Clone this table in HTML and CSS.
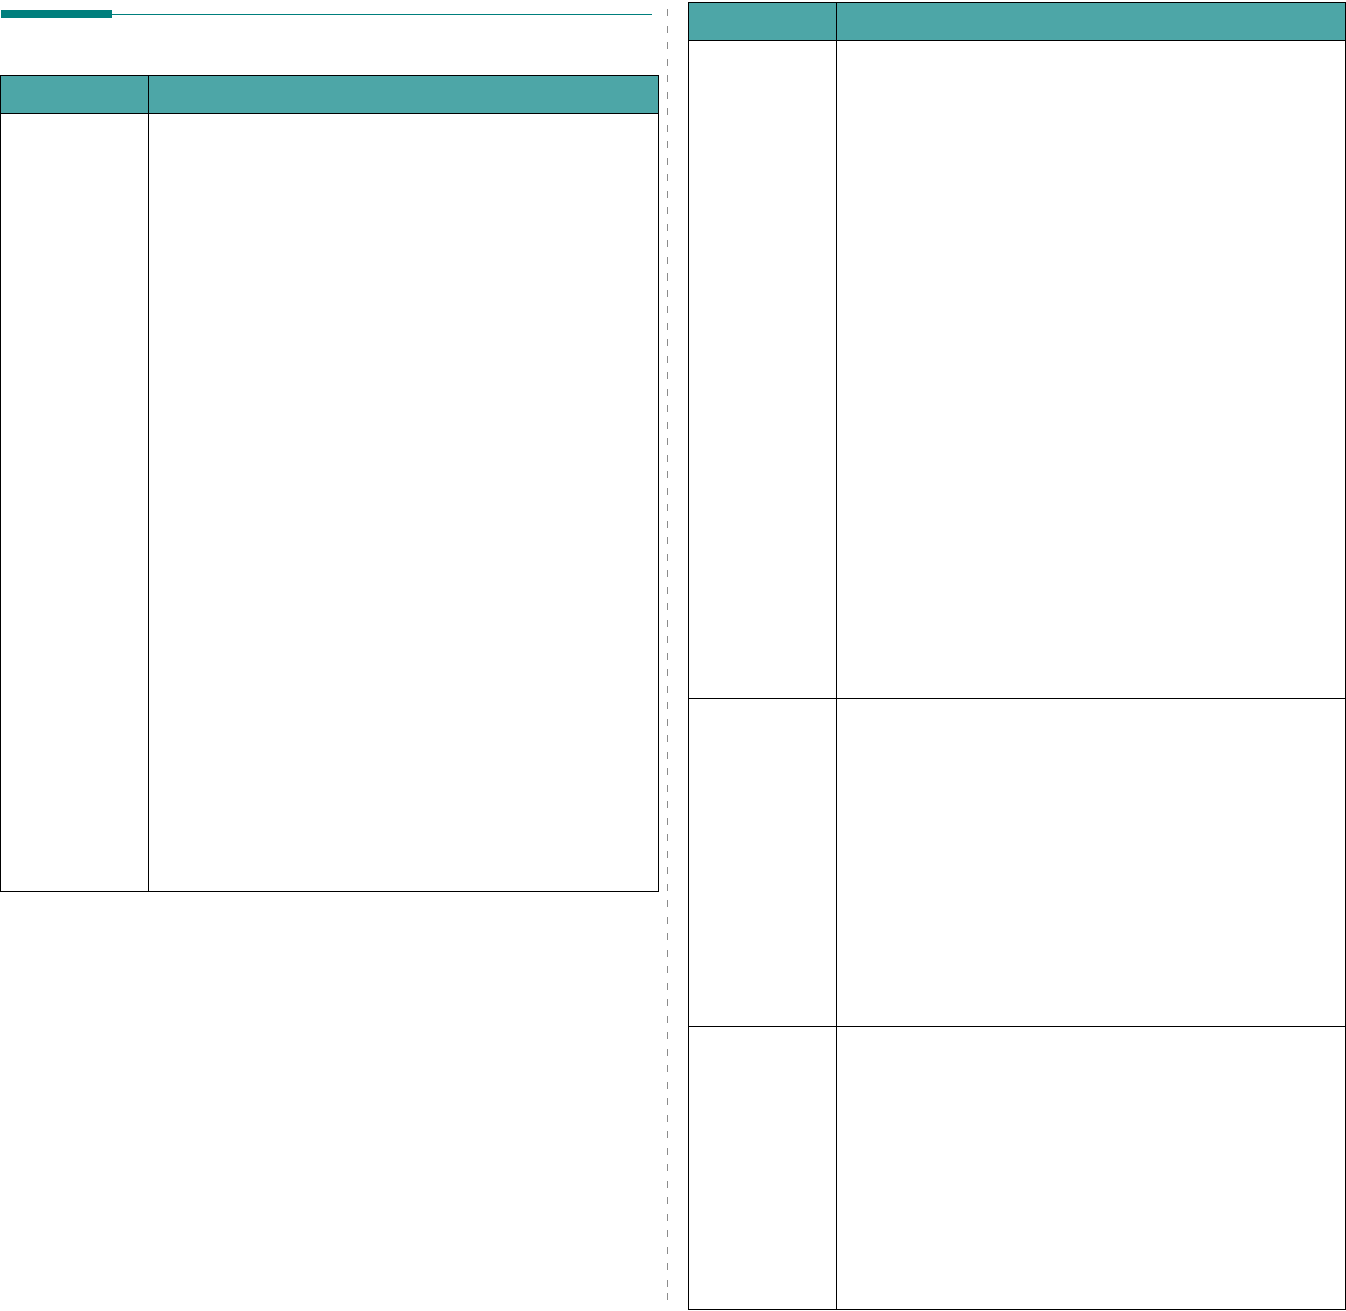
FILE: index.html
```html
<!DOCTYPE html>
<html lang="en">
<head>
    <meta charset="UTF-8">
    <meta name="viewport" content="width=device-width, initial-scale=1.0">
    <title>Specifications</title>
    <link rel="stylesheet" href="styles.css">
</head>
<body>
    <div class="page">
        <div class="column column-left">
            <div class="rule">
                <span class="rule-bar"></span>
                <span class="rule-line"></span>
            </div>

            <div class="spec-table spec-table-left">
                <div class="cell head"></div>
                <div class="cell head"></div>
                <div class="cell row-main"></div>
                <div class="cell row-main"></div>
            </div>
        </div>

        <div class="separator"></div>

        <div class="column column-right">
            <div class="spec-table spec-table-right">
                <div class="cell head"></div>
                <div class="cell head"></div>
                <div class="cell row-one"></div>
                <div class="cell row-one"></div>
                <div class="cell row-two"></div>
                <div class="cell row-two"></div>
                <div class="cell row-three"></div>
                <div class="cell row-three"></div>
            </div>
        </div>
    </div>
</body>
</html>
```

FILE: styles.css
```css
body {
    margin: 0;
    background: #ffffff;
    font-family: 'Liberation Sans', Arial, sans-serif;
    color: #000000;
}

.page {
    display: flex;
    align-items: flex-start;
}

.column-left {
    width: 659px;
}

.rule {
    display: flex;
    align-items: center;
    height: 8px;
    margin-top: 10px;
}

.rule-bar {
    width: 111px;
    height: 8px;
    margin-left: 1px;
    background: #007f7d;
}

.rule-line {
    width: 540px;
    height: 1px;
    background: #007f7d;
}

.separator {
    width: 1px;
    height: 1300px;
    margin-left: 8px;
    background: repeating-linear-gradient(to bottom, #8c8c8c 0 7px, transparent 7px 16.5px);
    background-position: 0 -7px;
}

.column-right {
    margin-left: 20px;
    padding-top: 2px;
}

/* tables */
.spec-table {
    display: grid;
    border-top: 1px solid #000000;
    border-left: 1px solid #000000;
}

.spec-table-left {
    margin-top: 57px;
    grid-template-columns: 148px 510px;
    grid-template-rows: 38px 778px;
}

.spec-table-right {
    grid-template-columns: 148px 509px;
    grid-template-rows: 38px 658px 328px 283px;
}

.cell {
    box-sizing: border-box;
    border-right: 1px solid #000000;
    border-bottom: 1px solid #000000;
}

.head {
    background: #4da6a7;
}
```
